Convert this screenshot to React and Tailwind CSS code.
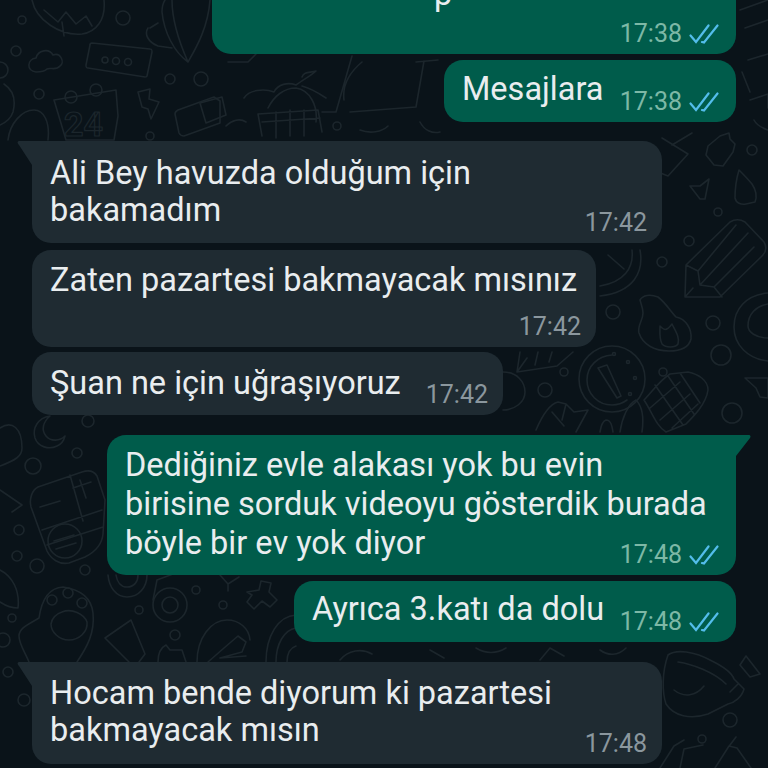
import React from "react";

// faint doodle wallpaper behind the chat
const Doodles = () => (
  <svg
    className="absolute inset-0 w-full h-full"
    viewBox="0 0 768 768"
    fill="none"
    stroke="#1c262c"
    strokeWidth="1.6"
    strokeLinejoin="round"
    strokeLinecap="round"
  >
    {/* small rings */}
    {[
      [22, 20, 4], [123, 18, 7], [16, 51, 5], [0, 70, 8], [39, 94, 5], [170, 79, 5], [201, 79, 7],
      [150, 136, 4], [337, 126, 4], [88, 421, 6], [77, 453, 5], [33, 466, 8], [19, 530, 5],
      [17, 556, 5], [37, 566, 7], [12, 618, 4], [85, 570, 5], [3, 640, 7], [8, 672, 5], [24, 700, 6],
      [752, 150, 5], [718, 212, 4], [689, 241, 5], [663, 372, 4], [564, 372, 4], [545, 390, 7],
      [713, 323, 7], [721, 355, 10], [732, 413, 10], [730, 720, 7], [702, 739, 4], [662, 262, 5],
      [613, 312, 7], [139, 610, 4], [196, 590, 4], [223, 605, 4], [175, 635, 5],
    ].map(([x, y, r], i) => (
      <circle key={i} cx={x} cy={y} r={r} />
    ))}

    {/* beach ball, top left */}
    <path d="M32 0c4 20 28 36 50 34 14-2 24-14 22-34M44 10l14 12 8-10 10 12 10-8 6 10M62 22l2 14" />
    {/* cloud */}
    <path d="M36 72c-10-1-9-13 0-14 2-8 13-10 17-3 8-3 12 8 7 11-4 5-10 1-13 3-3 3-7 3-11 3z" />
    {/* speech box with dots */}
    <path d="M92 43l58 6c2 0 2 1 2 3l-5 24c0 1-1 1-2 1l-57-9c-2 0-2-1-2-3l4-20c0-1 1-2 2-2z" />
    <circle cx="105" cy="60" r="3" /><circle cx="116" cy="61" r="3.5" /><circle cx="128" cy="62" r="3.5" />
    {/* balloon */}
    <path d="M188 62c-14-10-24-30-26-50 0-5 1-9 3-12M188 62c8-14 20-34 22-62M172 0c0 22 8 44 16 62M148 28c-4 6 0 14 10 18l14 2M150 28l8-5" />
    {/* calendar 24 */}
    <path d="M54 100l62-10 2 26-4 24H66z" />
    <circle cx="71" cy="97" r="6" /><circle cx="96" cy="90" r="6" />
    <text x="64" y="136" fontSize="34" fontFamily="Roboto, sans-serif" fontWeight="700" fill="none" strokeWidth="1.2">24</text>
    {/* lightning */}
    <path d="M138 92l12-3-1 10 10 3-8 17-3-10-6-2z" />
    {/* rounded square */}
    <path d="M178 110l36-13 6 4v22l-36 13c-3 0-4-1-5-3l-4-19c0-2 1-3 3-4z" />
    {/* big blob bottom left of header */}
    <path d="M4 84c9 6 12 16 9 28-2 6-6 10-13 13M8 140c2-17 14-30 26-30 10 0 16 12 14 30" />

    {/* hut */}
    <path d="M244 98c5-8 20-10 30-6 4-8 14-10 22-7 8-6 16-10 20-14-6 2-12 0-14 6M302 86c8 2 18 8 24 12M268 108c6-12 16-20 28-20 14 2 22 18 20 34M262 136l-4-22 60-4 4 22M276 112v26M290 110v26M304 110v26M262 122l58-4" />
    {/* stand and hanging sign */}
    <path d="M200 103l22-6 4 18-20 8zM352 56l-16 56h-14M350 112l66-5 8-46M362 62c-12 10-20 22-18 38M416 62l22-2M256 54l-8 8h-20" />
    <path d="M226 126c6-6 14-8 20-4M420 122c4 8 12 12 20 10M360 130c10 4 22 2 28-4" />

    {/* crescent, calculator, paw on left edge */}
    <path d="M50 416c-12 2-18 12-15 22 3 9 14 12 22 8 5-2 7-6 8-10-5 5-14 6-19 0-5-6-3-14 4-20z" />
    <path d="M0 428c12-8 22 0 22 20 0 8-6 12-22 18M0 490l22 15-10 7M0 570c12 6 20 20 18 38-6 0-12-2-18-6" />
    <path d="M38 487l44-15c6-2 12-1 15 4l8 24-2 34c-1 10-8 18-18 23l-16 6c-10 2-18-4-22-12l-16-44c-2-8 1-17 7-20zM70 475l13 46M40 507l20-6M73 488l18-6M80 480l6 18M42 530l60-20M47 545l56-18" />
    <circle cx="65" cy="541" r="17" />
    <path d="M54 541l20-6M56 549l20-6" />
    <path d="M29 662c-4-10-10-18-10-26 0-8 10-12 20-18 2-14 8-30 24-31 14 2 28 8 30 26 2 20-6 34-16 49" />
    <circle cx="68" cy="593" r="5" /><circle cx="52" cy="600" r="5" /><circle cx="82" cy="603" r="5" />
    <path d="M62 612c10-4 22 2 25 10 1 10-8 18-18 18-10 0-18-8-18-16 1-6 5-10 11-12z" />

    {/* lower gap shapes */}
    <path d="M108 575c1 12 8 22 19 22 12 0 20-10 20-22M116 575c1 7 5 12 11 12 7 0 11-5 11-12" />
    <circle cx="170" cy="605" r="17" /><circle cx="170" cy="605" r="8" />
    <path d="M153 600l4-20 16-6M220 575l8 9 11-7M228 584v7" />
    <path d="M247 592l12-2 2-9 10 2-2 9 8 8-7 7-8-6-8 8-7-7 5-7z" />
    <path d="M105 638l26-18 14 34-6 8M105 638l24 24" />
    <path d="M158 662c0-8 2-14 8-17l4 5 12 0 4 12" />
    <path d="M197 662c0-24 14-42 30-42 12 0 22 8 23 20M208 662l16-14 14-12 8 6-4 10-22 6 26-2" />
    <path d="M266 662c0-26 12-46 30-47M276 662c0-18 8-32 20-34M287 662c0-8 3-14 9-16" />
    <path d="M340 660c8-10 22-12 32-6M430 650l14 8M476 648c10 6 20 6 30 0M540 660l10-12 14 8M600 650c8 6 18 6 26-2" />

    {/* wheel beside the short bubble */}
    <path d="M640 250c4 22-6 42-40 46M632 250c2 18-8 32-32 36M608 255l16 14" />

    {/* right column */}
    <path d="M708 146l12-10 9-3 1 6 5 5-2 8-10 14-9-1-8-10z" />
    <path d="M739 170c-3 10-4 20-4 28 1 5 6 7 11 6l9-2c2-5 1-12-3-18-5-6-9-10-13-14z" />
    <path d="M690 186l10 0 9-7-4 20-5 0z" />
    <path d="M662 138l26 16-20 22-20-8M672 145l20-12M660 190v-24" />
    <path d="M685 297l1-32 44-43c5-3 10-3 15 0l19 20c3 5 2 10-2 14l-42 41zM686 265l12 6 2 14 14 2 8 10M698 271l38-46M714 287l40-40M700 285l48-52M685 297l8-9" />
    {/* flame */}
    <path d="M640 300c3-5 10-6 18-3 8 6 12 14 18 20 10 2 16 12 15 22-2 8-10 12-22 12-14 0-26-6-30-18-2-8 4-12 4-20 0-5-2-9-3-13zM660 326c4 4 6 6 12-2 4 8 8 14 6 20-3 4-12 4-16 0-3-6-2-12-2-18z" />
    <path d="M768 293c-22 2-34 16-34 34s14 32 34 34M768 304c-12 2-20 10-20 22 0 6 8 12 20 12" />
    <path d="M768 130c-6-2-12-6-14-10M740 10l28-10M745 28l23-8M748 60l20-6M750 100l18-6v14M742 72l8 20" />

    {/* clock */}
    <circle cx="612" cy="379" r="33" />
    <path d="M612 355c-14 1-25 11-25 25 0 14 11 25 25 25 6 0 11-2 15-5" />
    <path d="M598 368l9-3 14 31-4 2zM607 365l-9 3" />
    <circle cx="614" cy="354" r="1.5" /><circle cx="628" cy="362" r="1.5" /><circle cx="635" cy="378" r="1.5" /><circle cx="630" cy="394" r="1.5" />
    {/* bitten thing under bubble and bag */}
    <path d="M503 372c14 0 22 10 22 20 0 10-10 18-22 18M517 372l10-14M520 352l-3 20 40-6 16-14M538 352l-3 13M552 352l-3 10" />
    <path d="M536 430c6-14 14-26 22-28l8 2 8 8 14-2-12 22M552 412l12 14M566 404l-4 16" />
    <path d="M620 432c2-14 8-28 16-32 6 6 8 18 6 32M600 432c1-4 1-10 6-12 5 0 6 6 7 12" />
    {/* corn */}
    <path d="M644 400c8-8 16-20 26-26l18-2c10 2 20 8 20 18-2 14-14 26-22 34l-20 8c-10-6-14-20-22-32zM655 385l28 40M668 376l26 38M680 373l20 30M650 408l30-26M660 420l30-26M672 428l26-24" />
    <path d="M745 378h23v20l-8-1-4-9z" />

    {/* cup */}
    <path d="M668 655c8-6 26-4 44 6 12 6 20 12 22 18l10 10c-2 8-10 14-16 15l-20 10c-18 6-34 2-42-10-4-12-4-32 2-49zM678 662c14 2 36 10 48 22M674 690c10 8 22 6 30-4M730 692l8-8" />
    <path d="M703 745l-19 4-4 19M660 768l14-22 10-6" />
    <path d="M715 768l14-22 8 2 14 20M730 745l6-8M746 656l14 18-10 3-10-12z" />
  </svg>
);

const DoubleCheck = () => (
  <svg width="30" height="22" viewBox="0 0 30 22" fill="none" stroke="#53bdeb" strokeWidth="2.2" strokeLinecap="round" className="shrink-0">
    <path d="M1.5 12.5l5.5 6.5L19.5 2.5" />
    <path d="M13 19l2 .5L28.5 2.5" />
  </svg>
);

const Bubble = ({ out, tail, time, className, children }) => {
  const bg = out ? "bg-[#005c4b]" : "bg-[#1f2b32]";
  return (
    <div className={`relative rounded-[19px] ${bg} text-[#e9edef] ${className}`}>
      {tail && out && (
        <svg className="absolute -right-[15px] top-0" width="20" height="30" viewBox="0 0 20 30">
          <path d="M0 0H18c1.500 0 2 1.500 1 3L5 21V30H0z" fill="#005c4b" />
        </svg>
      )}
      {tail && !out && (
        <svg className="absolute -left-[15px] top-0" width="22" height="30" viewBox="0 0 22 30">
          <path d="M22 0H3C0 0 0 2 2 4l13 20v6h7z" fill="#1f2b32" />
        </svg>
      )}
      {children}
      <div className={`absolute bottom-[5px] flex items-center gap-[7px] ${out ? "right-[17px]" : "right-[15px]"}`}>
        <span className={`text-[25px] leading-[30px] ${out ? "text-[#7db8a6]" : "text-[#8b979e]"}`}>{time}</span>
        {out && <DoubleCheck />}
      </div>
    </div>
  );
};

const rowOut = "flex justify-end pr-[32px]";
const rowIn = "flex pl-[32px]";
const txt = "text-[32.5px] leading-[37px] whitespace-nowrap";

export default function App() {
  return (
    <div className="relative h-[768px] w-[768px] overflow-hidden bg-[#0a1319] font-['Roboto',sans-serif]">
      <Doodles />
      <div className="relative flex flex-col -mt-[46px]">
        <div className={rowOut}>
          <Bubble out time="17:38" className="w-[524px] h-[100px]">
            <div className={`${txt} pl-[222px] pt-[22px]`}>p</div>
          </Bubble>
        </div>
        <div className={`${rowOut} mt-[6px]`}>
          <Bubble out time="17:38" className="w-[292px] h-[62px]">
            <div className={`${txt} pl-[18px] pt-[11px]`}>Mesajlara</div>
          </Bubble>
        </div>
        <div className={`${rowIn} mt-[19px]`}>
          <Bubble tail time="17:42" className="w-[630px] h-[102px] rounded-tl-none">
            <div className={`${txt} pl-[18px] pt-[14px]`}>
              Ali Bey havuzda olduğum için
              <br />
              bakamadım
            </div>
          </Bubble>
        </div>
        <div className={`${rowIn} mt-[7px]`}>
          <Bubble time="17:42" className="w-[564px] h-[97px]">
            <div className={`${txt} pl-[18px] pt-[12px]`}>Zaten pazartesi bakmayacak mısınız</div>
          </Bubble>
        </div>
        <div className={`${rowIn} mt-[5px]`}>
          <Bubble time="17:42" className="w-[471px] h-[63px]">
            <div className={`${txt} pl-[18px] pt-[13px]`}>Şuan ne için uğraşıyoruz</div>
          </Bubble>
        </div>
        <div className={`${rowOut} mt-[20px]`}>
          <Bubble out tail time="17:48" className="w-[629px] h-[140px] rounded-tr-none">
            <div className={`${txt} pl-[18px] pt-[11px] leading-[39px]`}>
              Dediğiniz evle alakası yok bu evin
              <br />
              birisine sorduk videoyu gösterdik burada
              <br />
              böyle bir ev yok diyor
            </div>
          </Bubble>
        </div>
        <div className={`${rowOut} mt-[6px]`}>
          <Bubble out time="17:48" className="w-[442px] h-[61px]">
            <div className={`${txt} pl-[18px] pt-[10px]`}>Ayrıca 3.katı da dolu</div>
          </Bubble>
        </div>
        <div className={`${rowIn} mt-[20px]`}>
          <Bubble tail time="17:48" className="w-[630px] h-[102px] rounded-tl-none">
            <div className={`${txt} pl-[18px] pt-[13px]`}>
              Hocam bende diyorum ki pazartesi
              <br />
              bakmayacak mısın
            </div>
          </Bubble>
        </div>
      </div>
    </div>
  );
}
